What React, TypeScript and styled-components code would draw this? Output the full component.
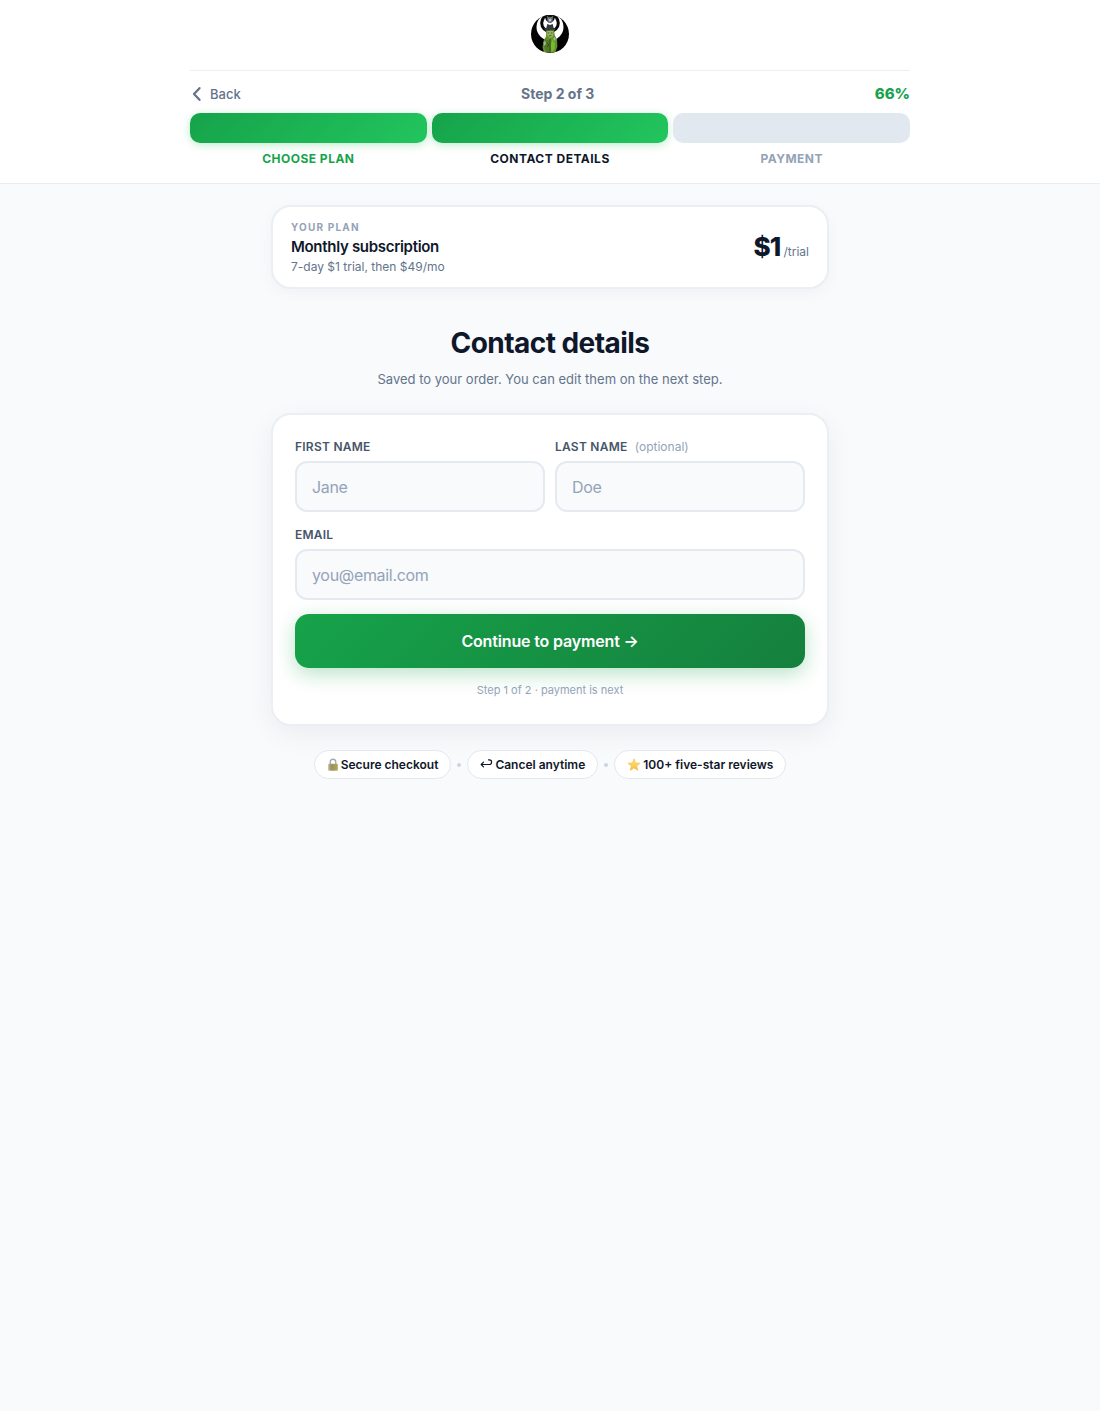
import React from "react";
import styled, { createGlobalStyle, css } from "styled-components";

const GlobalStyle = createGlobalStyle`
  *, *::before, *::after { box-sizing: border-box; }
  body {
    margin: 0;
    background: #f8fafc;
    color: #0f172a;
    font-family: Inter, "Liberation Sans", sans-serif;
    -webkit-font-smoothing: antialiased;
  }
  button, input { font-family: inherit; }
`;

const Header = styled.header`
  background: #fff;
  border-bottom: 1px solid #e8edf3;
  padding: 0 20px 16px;
`;

const HeaderInner = styled.div`
  max-width: 720px;
  margin: 0 auto;
`;

const Brand = styled.div`
  display: flex;
  justify-content: center;
  padding: 14px 0 16px;
  border-bottom: 1px solid #eceff3;

  svg { display: block; }
`;

const StepNav = styled.div`
  display: flex;
  align-items: center;
  justify-content: space-between;
  height: 42px;
  padding-top: 4px;
`;

const BackButton = styled.button`
  display: flex;
  align-items: center;
  gap: 6px;
  padding: 0;
  border: 0;
  background: none;
  color: #64748b;
  font-size: 13px;
  font-weight: 500;
  line-height: 20px;
  cursor: pointer;
`;

const StepCount = styled.span`
  color: #64748b;
  font-size: 14px;
  font-weight: 700;
  line-height: 20px;
`;

const Percent = styled.span`
  color: #16a34a;
  font-size: 15px;
  font-weight: 800;
  line-height: 20px;
`;

const Steps = styled.ol`
  display: grid;
  grid-template-columns: repeat(3, 1fr);
  gap: 5px;
  margin: 0;
  padding: 0;
  list-style: none;
`;

type StepState = "done" | "current" | "todo";

const labelColor = { done: "#16a34a", current: "#0f172a", todo: "#94a3b8" };

const Step = styled.li<{ $state: StepState }>`
  color: ${(p) => labelColor[p.$state]};
  font-size: 12px;
  font-weight: 700;
  line-height: 16px;
  letter-spacing: 0.04em;
  text-align: center;
  text-transform: uppercase;

  &::before {
    content: "";
    display: block;
    height: 30px;
    margin-bottom: 8px;
    border-radius: 10px;
    background: #e2e8f0;
    ${(p) =>
      p.$state !== "todo" &&
      css`
        background: linear-gradient(135deg, #16a34a, #22c55e);
        box-shadow: 0 2px 8px rgba(34, 197, 94, 0.3);
      `}
  }
`;

const Main = styled.main`
  max-width: 598px;
  margin: 0 auto;
  padding: 21px 20px 40px;
`;

const Card = styled.div`
  background: #fff;
  border: 2px solid #ebeef2;
  border-radius: 20px;
`;

const PlanCard = styled(Card)`
  display: flex;
  align-items: center;
  justify-content: space-between;
  padding: 12px 18px;
  box-shadow: 0 4px 16px rgba(15, 23, 42, 0.04);
`;

const PlanEyebrow = styled.div`
  color: #94a3b8;
  font-size: 10px;
  font-weight: 700;
  line-height: 16px;
  letter-spacing: 0.12em;
  text-transform: uppercase;
`;

const PlanName = styled.div`
  font-size: 15px;
  font-weight: 600;
  line-height: 24px;
  letter-spacing: -0.02em;
`;

const PlanTerms = styled.div`
  color: #64748b;
  font-size: 12px;
  font-weight: 400;
  line-height: 16px;
`;

const Price = styled.div`
  display: flex;
  align-items: baseline;
  gap: 3px;
  padding-top: 4px;
  color: #64748b;
  font-size: 12px;
  font-weight: 400;
  line-height: 32px;

  strong {
    color: #0f172a;
    font-size: 26px;
    font-weight: 800;
    letter-spacing: -0.03em;
  }
`;

const Title = styled.h1`
  margin: 34px 0 6px;
  font-size: 28px;
  font-weight: 700;
  line-height: 40px;
  letter-spacing: -0.02em;
  text-align: center;
`;

const Subtitle = styled.p`
  margin: 0 0 24px;
  color: #64748b;
  font-size: 13px;
  line-height: 20px;
  text-align: center;
`;

const FormCard = styled(Card).attrs({ as: "form" })`
  display: grid;
  grid-template-columns: 1fr 1fr;
  gap: 14px 10px;
  padding: 23px 22px 22px;
  box-shadow: 0 8px 28px rgba(15, 23, 42, 0.06);
`;

const Field = styled.div<{ $wide?: boolean }>`
  display: flex;
  flex-direction: column;
  gap: 5px;
  min-width: 0;
  ${(p) => p.$wide && css`grid-column: 1 / -1;`}
`;

const Label = styled.label`
  color: #475569;
  font-size: 12px;
  font-weight: 600;
  line-height: 18px;
  letter-spacing: 0.02em;

  small {
    margin-left: 4px;
    color: #94a3b8;
    font-size: 12px;
    font-weight: 400;
    letter-spacing: 0;
  }
`;

const Input = styled.input`
  width: 100%;
  height: 51px;
  padding: 0 15px;
  border: 2px solid #e5eaf1;
  border-radius: 12px;
  outline: none;
  background: #f8fafc;
  color: #0f172a;
  font-size: 16px;
  letter-spacing: -0.02em;

  &::placeholder { color: #94a3b8; opacity: 1; }
  &:focus { border-color: #16a34a; }
`;

const Submit = styled.button`
  grid-column: 1 / -1;
  height: 54px;
  border: 0;
  border-radius: 14px;
  background: linear-gradient(135deg, #16a34a, #15803d);
  box-shadow: 0 6px 20px rgba(22, 163, 74, 0.3);
  color: #fff;
  font-size: 16px;
  font-weight: 600;
  letter-spacing: -0.01em;
  cursor: pointer;
`;

const FormNote = styled.p`
  grid-column: 1 / -1;
  margin: 0 0 4px;
  color: #94a3b8;
  font-size: 11px;
  line-height: 16px;
  text-align: center;
`;

const TrustRow = styled.ul`
  display: flex;
  flex-wrap: wrap;
  align-items: center;
  justify-content: center;
  gap: 6px;
  margin: 24px 0 0;
  padding: 0;
  list-style: none;
`;

const TrustPill = styled.li`
  display: flex;
  align-items: center;
  gap: 2px;
  height: 29px;
  padding: 0 12px;
  border: 1px solid #e2e8f0;
  border-radius: 15px;
  background: #fff;
  font-size: 12px;
  font-weight: 600;
`;

const Dot = styled.li`
  width: 4px;
  height: 4px;
  border-radius: 50%;
  background: #cbd5e1;
`;

const Logo = () => (
  <svg width="40" height="40" viewBox="0 0 40 40" role="img" aria-label="Logo">
    <defs>
      <clipPath id="disc"><circle cx="20" cy="20" r="19" /></clipPath>
    </defs>
    <circle cx="20" cy="20" r="19" fill="#020202" />
    <g clipPath="url(#disc)">
      <circle cx="20" cy="13" r="13.500" fill="#fff" />
      <circle cx="20" cy="9" r="9.800" fill="#080808" />
      <circle cx="20" cy="9" r="6.800" fill="#fff" />
      <circle cx="20" cy="3.500" r="4.800" fill="#111" />
      <path d="M17 1.500 18.500 3h3L23 1.500l-.3 5-1.200 2.500h-3L17.300 6.500z" fill="#666c72" />
      <path d="m18.300 4.500 1.200.8 1.200-.8.8.8-.9 2.200h-1.500z" fill="#c4c8c9" />
      <path d="m16.300 14 1-4 2.700 1 2.700-1 1 4 2 .8-1 1.700H15.300l-1.300-1.700z" fill="#343942" />
      <path d="m16 16.500 8-.3.8 5.300 2.200 4 .4 7-2.100 6H14l-1.500-5 1.200-7 2.300-4z" fill="#648f2d" />
      <path d="m17 17 5.800-.3.8 3.300-1.500 3.500h-3.500l-2-3z" fill="#9ab65d" />
      <path d="m15 25 3 1.500 3-.5-1 4 1 8h-4.500L14 33z" fill="#507825" />
      <path d="m22 25 3 4-.5 6-3 4-.7-7z" fill="#76bd2d" />
      <path d="m13.500 28 2-1 .5 3-2 2zM24 23l2 2-1 2-2-2z" fill="#a5b597" />
      <path d="M17.500 19h1.700m1.600 0h1.700M18.500 22l3-.5M20 25v12m-3-8 2 2-2 2" stroke="#27391a" strokeWidth=".7" fill="none" />
    </g>
  </svg>
);

const Chevron = () => (
  <svg width="14" height="16" viewBox="0 0 14 16" fill="none" stroke="currentColor" strokeWidth="2.300" strokeLinecap="round" strokeLinejoin="round" aria-hidden="true">
    <path d="M9.500 2.200 4 8l5.500 5.800" />
  </svg>
);

const LockIcon = () => (
  <svg width="12" height="14" viewBox="0 0 12 14" aria-hidden="true">
    <defs>
      <linearGradient id="lock-body" x1="0" x2="1">
        <stop offset="0" stopColor="#c2bd9b" />
        <stop offset=".35" stopColor="#9b9460" />
        <stop offset="1" stopColor="#bcae5e" />
      </linearGradient>
    </defs>
    <path d="M3.200 7V4.300C3.200 2.300 4.300 1.200 6 1.200s2.800 1.100 2.800 3.100V7" fill="none" stroke="#a3abb0" strokeWidth="1.400" />
    <rect x="1.200" y="5.800" width="9.600" height="7" rx=".8" fill="url(#lock-body)" />
    <path d="M1.800 8h8.700M1.800 10h8.700" stroke="#8f8a55" strokeWidth=".4" />
  </svg>
);

const ReturnIcon = () => (
  <svg width="13" height="14" viewBox="0 0 13 14" fill="none" stroke="currentColor" strokeWidth="1.200" strokeLinecap="round" strokeLinejoin="round" aria-hidden="true">
    <path d="M8.500 1.800h.8c1.500 0 2.300.8 2.300 2.200s-.8 2.500-2.300 2.500H1.200M3.500 4.200 1.200 6.500l2.300 2.300" />
  </svg>
);

const StarIcon = () => (
  <svg width="14" height="14" viewBox="0 0 13 14" aria-hidden="true">
    <defs>
      <linearGradient id="star-fill" x1="0" y1="0" x2="0" y2="1">
        <stop offset="0" stopColor="#ffe680" />
        <stop offset="1" stopColor="#f6bd38" />
      </linearGradient>
    </defs>
    <path d="m6.500.8 1.700 4.100 4.400.3-3.400 2.900 1.100 4.300-3.800-2.300-3.800 2.300 1.100-4.300L.4 5.200l4.400-.3z" fill="url(#star-fill)" stroke="#eeb543" strokeWidth=".5" strokeLinejoin="round" />
  </svg>
);

const steps: { name: string; state: StepState }[] = [
  { name: "Choose plan", state: "done" },
  { name: "Contact details", state: "current" },
  { name: "Payment", state: "todo" },
];

export default function App() {
  return (
    <>
      <GlobalStyle />
      <Header>
        <HeaderInner>
          <Brand><Logo /></Brand>
          <StepNav>
            <BackButton type="button"><Chevron />Back</BackButton>
            <StepCount>Step 2 of 3</StepCount>
            <Percent>66%</Percent>
          </StepNav>
          <Steps>
            {steps.map((s) => (
              <Step key={s.name} $state={s.state} aria-current={s.state === "current" ? "step" : undefined}>
                {s.name}
              </Step>
            ))}
          </Steps>
        </HeaderInner>
      </Header>
      <Main>
        <PlanCard>
          <div>
            <PlanEyebrow>Your plan</PlanEyebrow>
            <PlanName>Monthly subscription</PlanName>
            <PlanTerms>7-day $1 trial, then $49/mo</PlanTerms>
          </div>
          <Price><strong>$1</strong>/trial</Price>
        </PlanCard>
        <Title>Contact details</Title>
        <Subtitle>Saved to your order. You can edit them on the next step.</Subtitle>
        <FormCard>
          <Field>
            <Label htmlFor="first-name">FIRST NAME</Label>
            <Input id="first-name" placeholder="Jane" autoComplete="given-name" />
          </Field>
          <Field>
            <Label htmlFor="last-name">LAST NAME <small>(optional)</small></Label>
            <Input id="last-name" placeholder="Doe" autoComplete="family-name" />
          </Field>
          <Field $wide>
            <Label htmlFor="email">EMAIL</Label>
            <Input id="email" type="email" placeholder="you@email.com" autoComplete="email" />
          </Field>
          <Submit type="button">Continue to payment →</Submit>
          <FormNote>Step 1 of 2 · payment is next</FormNote>
        </FormCard>
        <TrustRow>
          <TrustPill><LockIcon />Secure checkout</TrustPill>
          <Dot aria-hidden="true" />
          <TrustPill><ReturnIcon />Cancel anytime</TrustPill>
          <Dot aria-hidden="true" />
          <TrustPill><StarIcon />100+ five-star reviews</TrustPill>
        </TrustRow>
      </Main>
    </>
  );
}
